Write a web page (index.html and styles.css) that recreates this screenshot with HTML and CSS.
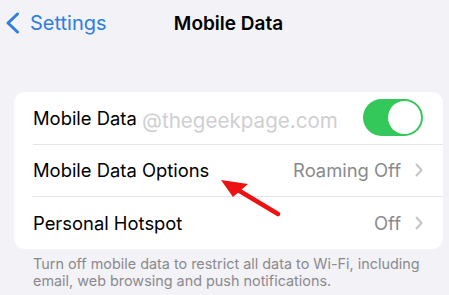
FILE: index.html
```html
<!DOCTYPE html>
<html lang="en">

<head>
  <meta charset="UTF-8" />
  <title>Mobile Data</title>
  <link rel="stylesheet" href="styles.css">
</head>

<body>
  <div class="screen">
    <div class="nav">
      <div class="back">
        <svg class="back-icon" width="15" height="22" viewBox="0 0 15 22">
          <path d="M12.5 2 L3 11 L12.5 20" fill="none" stroke="#2f7de1" stroke-width="3" stroke-linecap="round" stroke-linejoin="round" />
        </svg>
        <span>Settings</span>
      </div>
      <div class="title">Mobile Data</div>
      <div></div>
    </div>

    <div class="card">
      <div class="row">
        <span class="label">Mobile Data</span>
        <div class="toggle"><div class="knob"></div></div>
      </div>
      <div class="row">
        <span class="label">Mobile Data Options</span>
        <span class="value">Roaming Off</span>
        <svg class="chev" width="8" height="14" viewBox="0 0 8 14">
          <path d="M1.5 1.5 L6.5 7 L1.5 12.5" fill="none" stroke="#c4c4c7" stroke-width="2" stroke-linecap="round" stroke-linejoin="round" />
        </svg>
      </div>
      <div class="row">
        <span class="label">Personal Hotspot</span>
        <span class="value">Off</span>
        <svg class="chev" width="8" height="14" viewBox="0 0 8 14">
          <path d="M1.5 1.5 L6.5 7 L1.5 12.5" fill="none" stroke="#c4c4c7" stroke-width="2" stroke-linecap="round" stroke-linejoin="round" />
        </svg>
      </div>
    </div>

    <p class="footer">Turn off mobile data to restrict all data to Wi-Fi, including email, web browsing and push notifications.</p>

    <div class="watermark">@thegeekpage.com</div>

    <svg class="arrow" width="449" height="295" viewBox="0 0 449 295">
      <line x1="278" y1="214" x2="238" y2="190" stroke="#ee1111" stroke-width="4.5" stroke-linecap="round" />
      <polygon points="221,180 248,184 233,197" fill="#ee1111" />
    </svg>
  </div>
</body>

</html>
```

FILE: styles.css
```css
body {
  margin: 0;
  background: #f2f2f7;
  font-family: Inter, "Liberation Sans", sans-serif;
}

.screen {
  position: relative;
  width: 449px;
  height: 295px;
  overflow: hidden;
}

.nav {
  display: grid;
  grid-template-columns: 1fr auto 1fr;
  align-items: center;
  height: 46px;
}

.back {
  display: flex;
  align-items: center;
  gap: 10px;
  padding-left: 5px;
  color: #2f7de1;
  font-size: 20px;
}

.title {
  font-size: 19px;
  font-weight: 600;
  color: #000;
  padding-left: 8px;
}

.card {
  margin: 46px 6px 0 14px;
  background: #fff;
  border-radius: 11px;
  overflow: hidden;
}

.row {
  display: flex;
  align-items: center;
  height: 51.5px;
  margin-left: 19px;
  padding-right: 20px;
  border-bottom: 1px solid #e4e4e8;
}

.row:last-child {
  border-bottom: none;
}

.label {
  flex: 1;
  font-size: 18.4px;
  color: #000;
}

.value {
  font-size: 18.4px;
  color: #8a8a8e;
  margin-right: 14px;
}

.toggle {
  width: 60px;
  height: 37px;
  border-radius: 19px;
  background: #34c759;
  display: flex;
  align-items: center;
  justify-content: flex-end;
  padding: 0 2px;
  box-sizing: border-box;
}

.knob {
  width: 33px;
  height: 33px;
  border-radius: 50%;
  background: #fff;
}

.footer {
  margin: 6px 16px 0 33px;
  font-size: 14.4px;
  line-height: 17px;
  color: #8a8a8e;
}

.watermark {
  position: absolute;
  left: 142px;
  top: 108px;
  font-size: 20.6px;
  color: #cfcfd2;
}

.arrow {
  position: absolute;
  left: 0;
  top: 0;
}
```
